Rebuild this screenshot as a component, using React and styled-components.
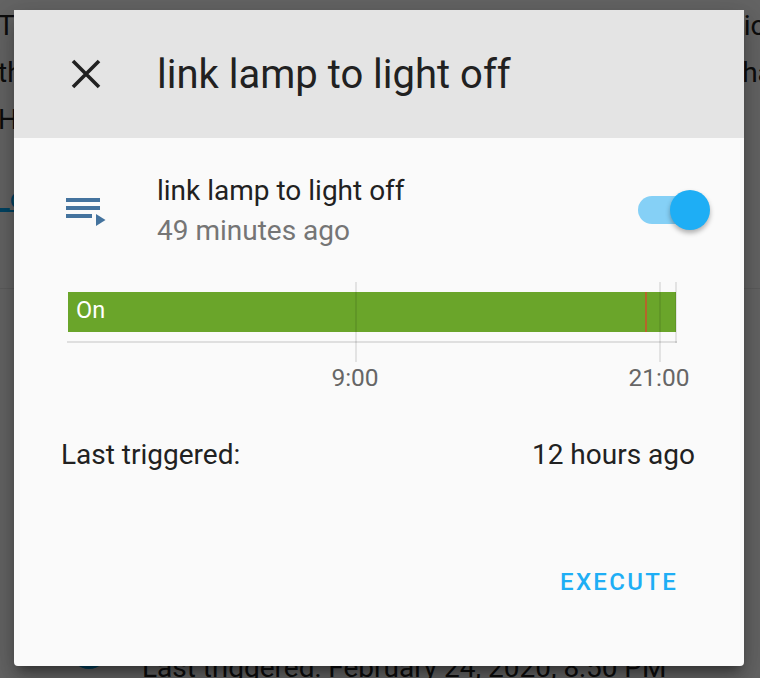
import styled, { createGlobalStyle } from 'styled-components';

const Global = createGlobalStyle`
  html, body {
    margin: 0;
    padding: 0;
    height: 100%;
    overflow: hidden;
    background: #fafafa;
    font-family: Roboto, "Liberation Sans", sans-serif;
  }
`;

const Page = styled.div`
  position: relative;
  width: 760px;
  height: 678px;
  overflow: hidden;
  background: #fafafa;
`;

const PageCard = styled.div`
  padding-top: 2px;
  height: 289px;
  border-bottom: 1px solid #e6e6e6;
  box-sizing: border-box;
`;

const PageLine = styled.p`
  display: flex;
  justify-content: space-between;
  width: 784px;
  margin: 0 0 0 -2px;
  font-size: 28px;
  line-height: 47px;
  color: #212121;
  white-space: nowrap;
`;

const PageLink = styled.a`
  display: block;
  margin-top: 36px;
  margin-left: -3px;
  font-size: 28px;
  line-height: 40px;
  color: #03a9f4;
  text-decoration: underline;
  white-space: nowrap;
`;

const PageRow = styled.div`
  display: flex;
  align-items: flex-start;
  gap: 34px;
  padding: 340px 0 0 70px;
  color: #212121;
  white-space: nowrap;
`;

const Dot = styled.span`
  width: 38px;
  height: 40px;
  flex: none;
  border-radius: 50%;
  background: #03a9f4;
`;

const RowText = styled.span`
  margin-top: 21px;
  font-size: 28px;
  line-height: 36px;
`;

const Backdrop = styled.div`
  position: absolute;
  inset: 0;
  background: rgba(0, 0, 0, 0.6);
`;

const Dialog = styled.div`
  position: absolute;
  left: 14px;
  top: 10px;
  width: 730px;
  height: 656px;
  display: flex;
  flex-direction: column;
  background: #fafafa;
  border-radius: 0 0 4px 4px;
  box-shadow: 0 16px 24px 2px rgba(0, 0, 0, 0.14), 0 6px 30px 5px rgba(0, 0, 0, 0.12), 0 8px 10px -5px rgba(0, 0, 0, 0.4);
  color: #212121;
`;

const Header = styled.div`
  height: 128px;
  flex: none;
  display: flex;
  align-items: center;
  background: #e4e4e4;
`;

const CloseButton = styled.button`
  width: 143px;
  padding: 0 0 0 56px;
  border: 0;
  background: none;
  display: flex;
  color: #212121;
`;

const Title = styled.h1`
  margin: 0;
  font-size: 40px;
  font-weight: 400;
`;

const Summary = styled.div`
  display: flex;
  align-items: center;
  height: 106px;
  margin-top: 20px;
  padding: 0 34px 0 52px;
`;

const StateIcon = styled.svg`
  width: 40px;
  height: 32px;
  flex: none;
  margin-right: 51px;
  margin-top: 6px;
  fill: #44739e;
`;

const Names = styled.div`
  flex: 1;
`;

const Name = styled.div`
  font-size: 28px;
  line-height: 40px;
`;

const Ago = styled.div`
  font-size: 28px;
  line-height: 40px;
  color: #757575;
`;

const Switch = styled.div`
  position: relative;
  width: 66px;
  height: 28px;
  margin: 0 6px 2px 0;
  border-radius: 14px;
  background: #85d0f6;
`;

const Knob = styled.span`
  position: absolute;
  right: -6px;
  top: -6px;
  width: 40px;
  height: 40px;
  border-radius: 50%;
  background: #1eaef5;
  box-shadow: 0 3px 5px rgba(0, 0, 0, 0.3);
`;

const Chart = styled.div`
  position: relative;
  height: 112px;
  margin: 18px 0 0 53px;
  width: 610px;
`;

const Bar = styled.div`
  margin: 10px 0 0 1px;
  width: 608px;
  height: 40px;
  background: #6aa52a;
  color: #fff;
  font-size: 23.5px;
  line-height: 37px;
  padding-left: 8px;
  box-sizing: border-box;
`;

const Axis = styled.div`
  margin-top: 9px;
  height: 2px;
  background: #dfdfdf;
`;

const Tick = styled.span`
  position: absolute;
  top: 0;
  left: ${p => p.$left}px;
  width: 2px;
  height: ${p => p.$h}px;
  background: rgba(0, 0, 0, 0.09);
`;

const Marker = styled.span`
  position: absolute;
  top: 10px;
  left: 578px;
  width: 2px;
  height: 40px;
  background: #b5652a;
`;

const TickLabel = styled.span`
  position: absolute;
  top: 82px;
  left: ${p => p.$left}px;
  transform: translateX(-50%);
  font-size: 24.5px;
  line-height: 28px;
  color: #666;
`;

const Stat = styled.div`
  display: flex;
  justify-content: space-between;
  margin-top: 41px;
  padding: 0 49px 0 47px;
  font-size: 28px;
  line-height: 40px;
`;

const Actions = styled.div`
  display: flex;
  justify-content: flex-end;
  margin-top: 93px;
  padding-right: 66px;
`;

const Execute = styled.button`
  border: 0;
  padding: 0;
  background: none;
  font-family: Roboto, "Liberation Sans", sans-serif;
  font-size: 24px;
  font-weight: 500;
  letter-spacing: 2.3px;
  line-height: 28px;
  color: #1eaef5;
`;

export default function App() {
  return (
    <Page>
      <Global />
      <PageCard>
        <PageLine><span>This</span><span>ion</span></PageLine>
        <PageLine><span>the</span><span>hat</span></PageLine>
        <PageLine><span>Hall</span></PageLine>
        <PageLink>_conditions</PageLink>
      </PageCard>
      <PageRow>
        <Dot />
        <RowText>Last triggered: February 24, 2020, 8:50 PM</RowText>
      </PageRow>
      <Backdrop />
      <Dialog>
        <Header>
          <CloseButton aria-label="Close">
            <svg width="32" height="32" viewBox="0 0 32 32">
              <path d="M3 3 L29 29 M29 3 L3 29" stroke="currentColor" strokeWidth="3.6" fill="none" />
            </svg>
          </CloseButton>
          <Title>link lamp to light off</Title>
        </Header>
        <Summary>
          <StateIcon viewBox="0 0 40 32">
            <rect x="0" y="0" width="34" height="4" />
            <rect x="0" y="8" width="34" height="4" />
            <rect x="0" y="16" width="26" height="4" />
            <path d="M30 16 L39.5 22 L30 28 Z" />
          </StateIcon>
          <Names>
            <Name>link lamp to light off</Name>
            <Ago>49 minutes ago</Ago>
          </Names>
          <Switch>
            <Knob />
          </Switch>
        </Summary>
        <Chart>
          <Bar>On</Bar>
          <Axis />
          <Marker />
          <Tick $left={288} $h={80} />
          <Tick $left={592} $h={80} />
          <Tick $left={608} $h={61} />
          <TickLabel $left={288}>9:00</TickLabel>
          <TickLabel $left={592}>21:00</TickLabel>
        </Chart>
        <Stat>
          <span>Last triggered:</span>
          <span>12 hours ago</span>
        </Stat>
        <Actions>
          <Execute>EXECUTE</Execute>
        </Actions>
      </Dialog>
    </Page>
  );
}
